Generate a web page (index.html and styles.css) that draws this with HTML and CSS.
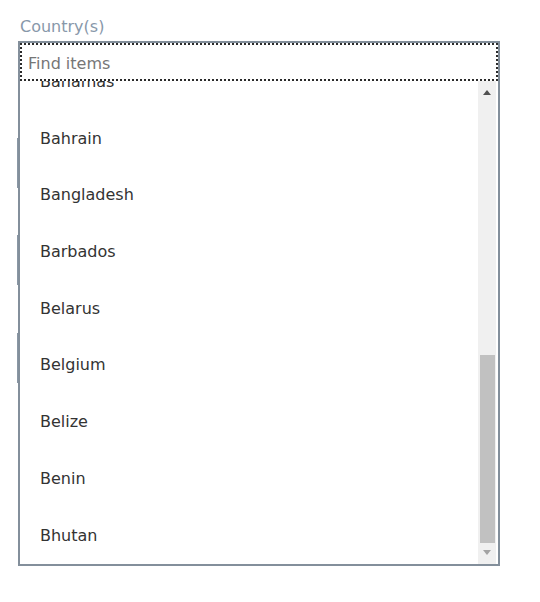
FILE: index.html
```html
<!DOCTYPE html>
<html lang="en">
<head>
    <meta charset="UTF-8">
    <meta name="viewport" content="width=device-width, initial-scale=1.0">
    <title>Country picker</title>
    <link rel="stylesheet" href="styles.css">
</head>
<body>

<div class="field">
    <label class="field-label" for="find">Country(s)</label>
    <div class="picker">
        <input type="text" id="find" class="search" placeholder="Find items" />
        <div class="list-wrap">
            <ul class="list">
                <li>Bahamas</li>
                <li>Bahrain</li>
                <li>Bangladesh</li>
                <li>Barbados</li>
                <li>Belarus</li>
                <li>Belgium</li>
                <li>Belize</li>
                <li>Benin</li>
                <li>Bhutan</li>
            </ul>
            <div class="scrollbar">
                <span class="arrow up"></span>
                <div class="track">
                    <div class="thumb"></div>
                </div>
                <span class="arrow down"></span>
            </div>
        </div>
    </div>
</div>

</body>
</html>
```

FILE: styles.css
```css
body {
    margin: 0;
    font-family: "DejaVu Sans", Verdana, sans-serif;
    font-size: 16px;
    background-color: white;
}

.field {
    padding: 17px 0 0 18px;
}

.field-label {
    display: block;
    padding-left: 2px;
    height: 24px;
    line-height: 20px;
    color: #8898aa;
}

.picker {
    position: relative;
    width: 482px;
    height: 525px;
    border: 2px solid #838f9b;
    box-sizing: border-box;
    display: flex;
    flex-direction: column;
}

/* bits of the fields behind the popup showing at the left edge */
.picker::before {
    content: "";
    position: absolute;
    left: -3px;
    top: 95px;
    width: 1px;
    height: 246px;
    background: repeating-linear-gradient(to bottom, #8a97a5 0 50px, transparent 50px 97.5px);
}

.search {
    height: 38px;
    margin: 0;
    padding: 3px 0 0 8px;
    border: none;
    box-sizing: border-box;
    font-family: inherit;
    font-size: 16px;
    color: #333;
    outline: 2px dotted #2b2b2b;
    outline-offset: -2px;
    caret-color: #555;
    position: relative;
    z-index: 1;
    background: white;
}

.search::placeholder {
    color: #767676;
}

.list-wrap {
    flex: 1;
    display: flex;
    overflow: hidden;
}

.list {
    flex: 1;
    list-style: none;
    margin: -27px 0 0 0;
    padding: 0;
}

.list li {
    height: 56.7px;
    line-height: 56.7px;
    padding-left: 20px;
    color: #333;
}

.scrollbar {
    width: 18px;
    margin-right: 2px;
    background-color: #f0f0f0;
    display: flex;
    flex-direction: column;
    align-items: center;
}

.arrow {
    width: 0;
    height: 0;
    border-left: 4px solid transparent;
    border-right: 4px solid transparent;
}

.arrow.up {
    margin: 9px 0 0;
    border-bottom: 5px solid #505050;
}

.arrow.down {
    margin: 7px 0 9px;
    border-top: 5px solid #a3a3a3;
}

.track {
    flex: 1;
    width: 100%;
    display: flex;
    flex-direction: column;
    justify-content: flex-end;
    align-items: center;
}

.thumb {
    width: 15px;
    height: 188px;
    background-color: #c1c1c1;
}
```
